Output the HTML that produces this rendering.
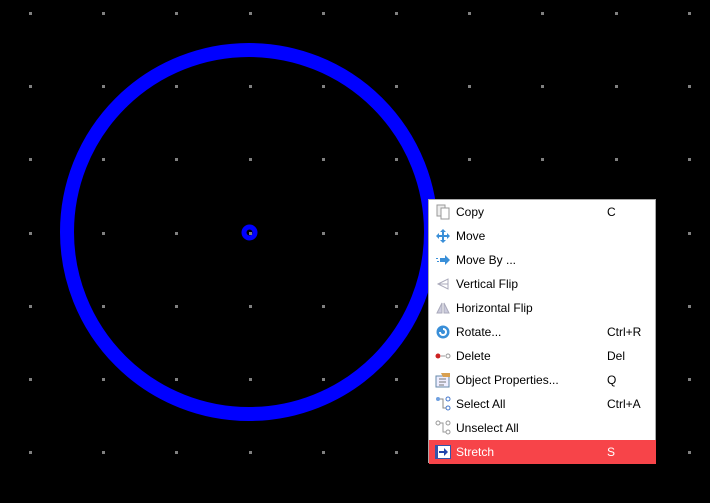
<!DOCTYPE html><html><head><style>
body{margin:0;width:710px;height:503px;background:#000;overflow:hidden;position:relative;font-family:"Liberation Sans",sans-serif}
.menu{position:absolute;left:428px;top:199px;width:228px;height:264px;background:#fff;border:1px solid #aaa;box-sizing:border-box}
.it{position:absolute;left:0;width:227px;height:24px;font-size:12px;color:#000;line-height:24px}
.it .t{position:absolute;left:27px}.it .s{position:absolute;left:178px}
.it svg{position:absolute;left:6px;top:4px}
.hl{background:#f74449;color:#fff}
</style></head><body>
<svg width="710" height="503" style="position:absolute;left:0;top:0">
<circle cx="249" cy="232" r="182" fill="none" stroke="#0000ff" stroke-width="14"/>
<circle cx="249.5" cy="232.5" r="5.5" fill="none" stroke="#0000ff" stroke-width="5"/>
<g fill="#808080" id="d"></g>
</svg>
<script>
var g=document.getElementById('d'),s='';
for(var i=0;i<10;i++)for(var j=0;j<7;j++){s+='<rect x="'+Math.round(29+73.2*i)+'" y="'+Math.round(12+73.2*j)+'" width="3" height="3"/>';}
g.innerHTML=s;
</script>
<div class="menu">
<div class="it" style="top:0"><svg width="16" height="16"><rect x="2" y="1" width="8" height="11" fill="#eee" stroke="#999"/><rect x="6" y="4" width="8" height="11" fill="#fff" stroke="#999"/></svg><span class="t">Copy</span><span class="s">C</span></div>
<div class="it" style="top:24px"><svg width="16" height="16"><path d="M8 1L11 4H9V7H12V5L15 8L12 11V9H9V12H11L8 15L5 12H7V9H4V11L1 8L4 5V7H7V4H5Z" fill="#3a8fd8"/></svg><span class="t">Move</span></div>
<div class="it" style="top:48px"><svg width="16" height="16"><path d="M5 6H10V3L15 8L10 13V10H5Z" fill="#3a8fd8"/><rect x="1" y="6" width="2" height="1" fill="#3a8fd8"/><rect x="2" y="9" width="2" height="1" fill="#3a8fd8"/></svg><span class="t">Move By ...</span></div>
<div class="it" style="top:72px"><svg width="16" height="16"><path d="M3 8L13 3V13Z" fill="none" stroke="#aab"/><path d="M3 8H13" stroke="#aab"/></svg><span class="t">Vertical Flip</span></div>
<div class="it" style="top:96px"><svg width="16" height="16"><path d="M7 3L2 13H7ZM9 3L14 13H9Z" fill="#ccd" stroke="#aab"/></svg><span class="t">Horizontal Flip</span></div>
<div class="it" style="top:120px"><svg width="16" height="16"><circle cx="8" cy="8" r="6.5" fill="#3a8fd8"/><path d="M5 8A3 3 0 1 0 8 5" fill="none" stroke="#fff" stroke-width="2"/></svg><span class="t">Rotate...</span><span class="s">Ctrl+R</span></div>
<div class="it" style="top:144px"><svg width="16" height="16"><circle cx="3" cy="8" r="2.5" fill="#c22"/><path d="M6 8H10" stroke="#999"/><circle cx="13" cy="8" r="2" fill="none" stroke="#999"/></svg><span class="t">Delete</span><span class="s">Del</span></div>
<div class="it" style="top:168px"><svg width="16" height="16"><rect x="1" y="4" width="13" height="11" fill="#eef" stroke="#6688aa"/><path d="M4 7H11M4 10H11M4 13H9" stroke="#777"/><path d="M6 1L15 1L15 5L8 5Z" fill="#d9a050"/></svg><span class="t">Object Properties...</span><span class="s">Q</span></div>
<div class="it" style="top:192px"><svg width="16" height="16"><circle cx="3" cy="3" r="2" fill="#6fa0e0"/><circle cx="13" cy="3" r="2" fill="none" stroke="#4477cc"/><circle cx="13" cy="12" r="2" fill="none" stroke="#4477cc"/><path d="M5 3H8V12H11" fill="none" stroke="#888"/></svg><span class="t">Select All</span><span class="s">Ctrl+A</span></div>
<div class="it" style="top:216px"><svg width="16" height="16"><circle cx="3" cy="3" r="2" fill="none" stroke="#999"/><circle cx="13" cy="3" r="2" fill="none" stroke="#999"/><circle cx="13" cy="12" r="2" fill="none" stroke="#999"/><path d="M5 3H8V12H11" fill="none" stroke="#999"/></svg><span class="t">Unselect All</span></div>
<div class="it hl" style="top:240px"><svg width="16" height="16"><rect x="0.5" y="1.5" width="15" height="13" fill="#fff" stroke="#3355aa"/><rect x="1" y="2" width="2" height="12" fill="#3355aa"/><path d="M4 7H9V4L13 8L9 12V9H4Z" fill="#2244aa"/></svg><span class="t">Stretch</span><span class="s">S</span></div>
</div>
</body></html>
